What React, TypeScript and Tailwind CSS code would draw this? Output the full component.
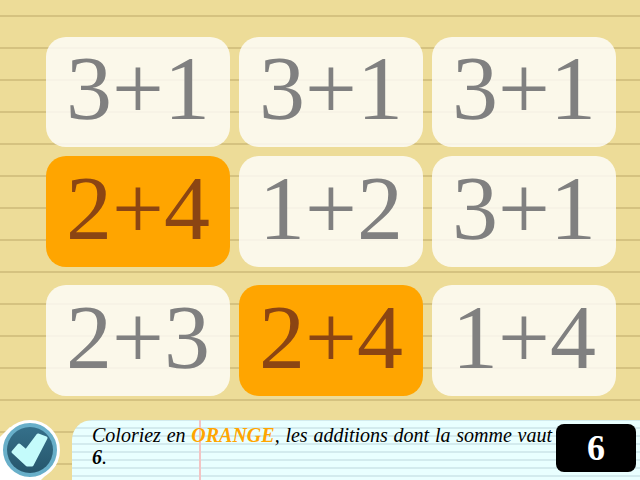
const rows = [
  {
    height: "h-[110px]",
    gap: "mt-[37px]",
    cards: [
      { label: "3+1", on: false },
      { label: "3+1", on: false },
      { label: "3+1", on: false },
    ],
  },
  {
    height: "h-[111px]",
    gap: "mt-[9px]",
    cards: [
      { label: "2+4", on: true },
      { label: "1+2", on: false },
      { label: "3+1", on: false },
    ],
  },
  {
    height: "h-[111px]",
    gap: "mt-[18px]",
    cards: [
      { label: "2+3", on: false },
      { label: "2+4", on: true },
      { label: "1+4", on: false },
    ],
  },
];

export default function App() {
  return (
    <div className="flex h-[480px] w-[640px] flex-col overflow-hidden bg-[#eddc98] bg-[repeating-linear-gradient(180deg,transparent_0,transparent_15px,#d5c280_15px,#d5c280_17px,transparent_17px,transparent_32px)] font-['Liberation_Serif',serif]">
      {rows.map((row, r) => (
        <div key={r} className={`flex gap-[9px] pl-[46px] ${row.gap}`}>
          {row.cards.map((c, i) => (
            <div
              key={i}
              className={`flex w-[184px] items-center justify-center rounded-[20px] pb-[8px] text-[92px] leading-none ${row.height} ${
                c.on ? "bg-[#ffa500] text-[#8b4513]" : "bg-white/80 text-[#808080]"
              }`}
            >
              {c.label}
            </div>
          ))}
        </div>
      ))}
      <div className="mt-[24px] flex items-start">
        <div className="relative h-[60px] w-[72px]">
          {/* white tab behind the round button */}
          <svg className="absolute left-0 top-0" width="72" height="60" viewBox="0 0 72 60">
            <polygon points="0,17 10,7 56,45 41,60 0,60" fill="#ffffff" />
          </svg>
          <div className="relative flex h-[60px] w-[60px] items-center justify-center rounded-full border-[3px] border-white bg-[#68afc9]">
            <div className="flex h-[46px] w-[46px] items-center justify-center rounded-full bg-gradient-to-b from-[#35708a] to-[#26566c]">
              <svg width="46" height="46" viewBox="0 0 46 46">
                <polygon
                  points="6,25 12,18 19,24 31,8 39,11 25,38 20,38"
                  fill="#c4fbfb"
                  stroke="#c4fbfb"
                  strokeWidth="3"
                  strokeLinejoin="round"
                />
              </svg>
            </div>
          </div>
        </div>
        <div className="relative flex h-[60px] w-[568px] items-start rounded-tl-[20px] bg-[#e9ffff] bg-[repeating-linear-gradient(180deg,#d3ebee_0,#d3ebee_1px,transparent_1px,transparent_7px,#d3ebee_7px,#d3ebee_8px)]">
          <div className="absolute bottom-0 left-[127px] top-0 w-[2px] bg-[#f3c4c4]" />
          <p className="relative ml-[20px] mt-[4px] w-[460px] text-justify text-[20px] italic leading-[22px] text-black">
            Coloriez en <b className="text-[#ffa500]">ORANGE</b>, les additions dont la somme vaut <b>6</b>.
          </p>
          <div className="relative ml-[4px] mt-[4px] flex h-[48px] w-[80px] items-center justify-center rounded-[8px] bg-black text-[36px] font-bold text-white">
            6
          </div>
        </div>
      </div>
    </div>
  );
}
